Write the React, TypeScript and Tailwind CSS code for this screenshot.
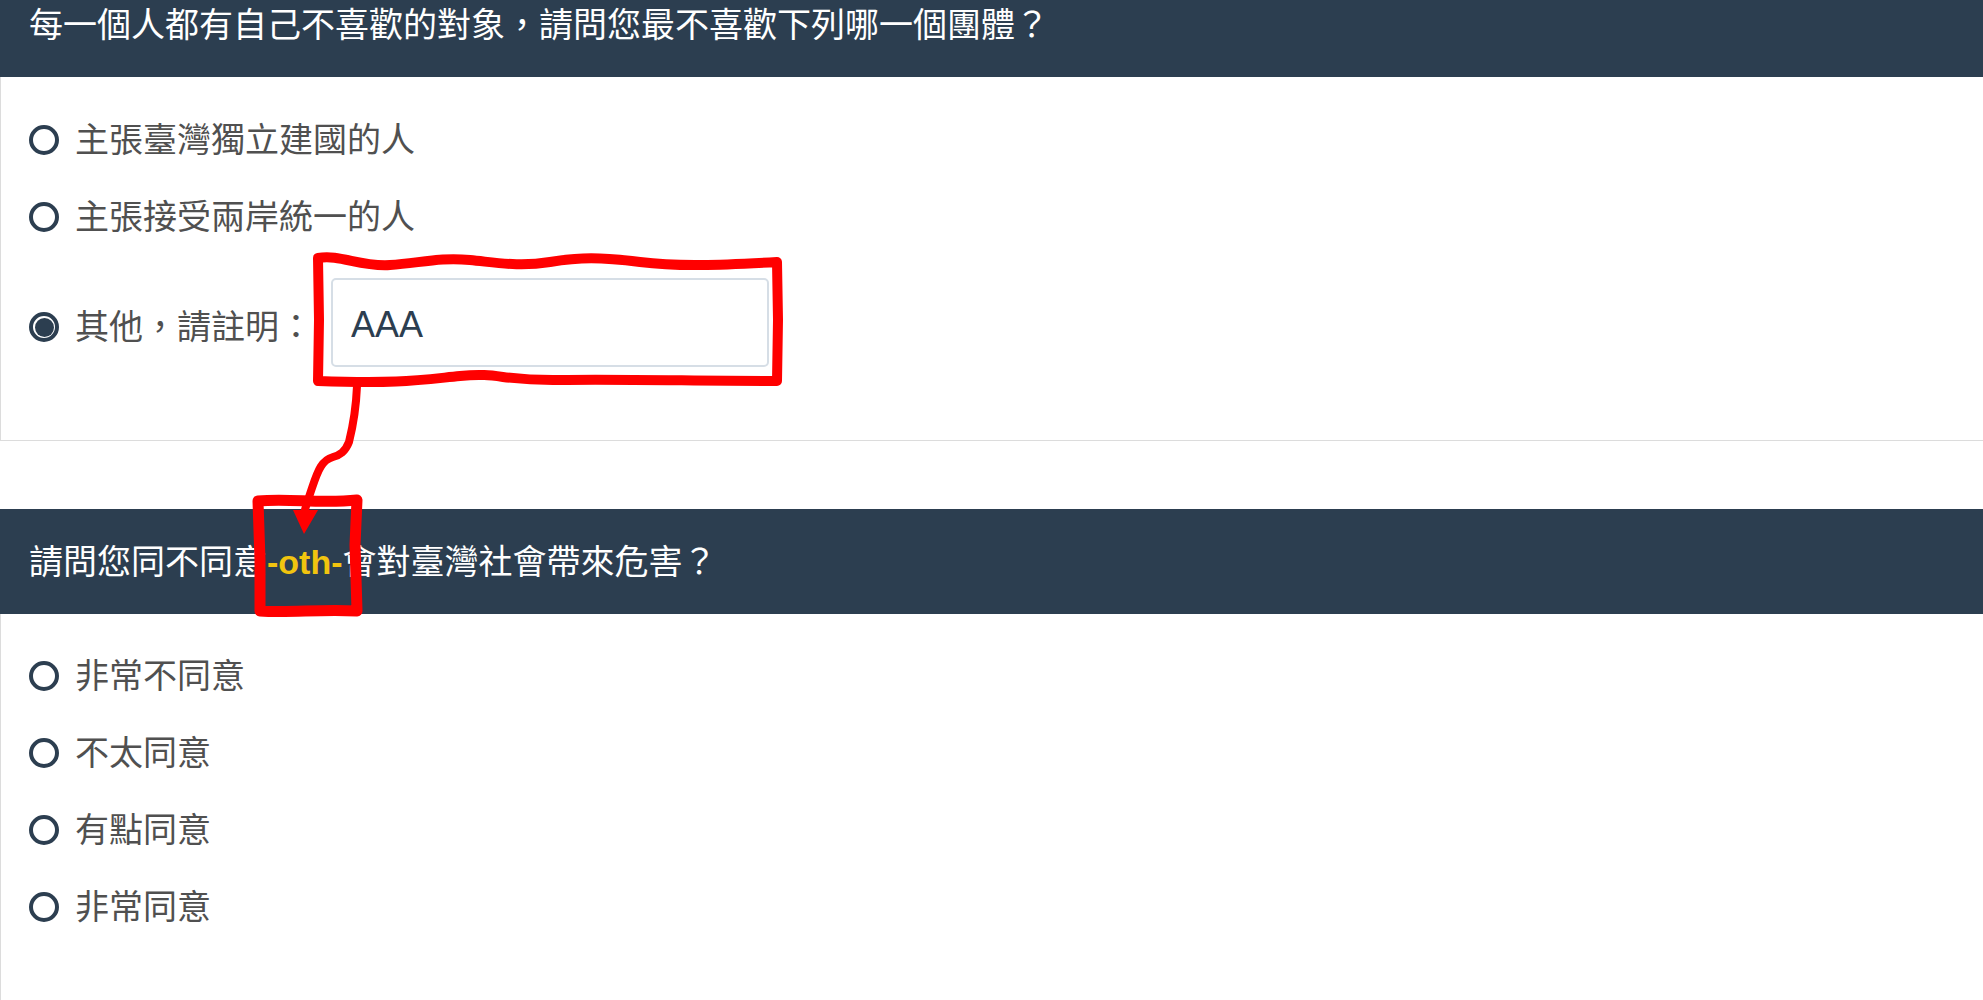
import React from "react";

const font = "font-['Liberation_Sans','Noto_Sans_CJK_TC',sans-serif]";

function Radio({ checked }: { checked?: boolean }) {
  return (
    <span className="w-[30px] h-[30px] shrink-0 rounded-full border-[4px] border-[#2c3e50] flex items-center justify-center">
      {checked && <span className="w-[19px] h-[19px] rounded-full bg-[#2c3e50]" />}
    </span>
  );
}

function Option({ label, checked, children }: { label: string; checked?: boolean; children?: React.ReactNode }) {
  return (
    <label className="flex items-center gap-[16px] h-[77px] text-[34px] leading-none text-[#505050]">
      <Radio checked={checked} />
      <span>{label}</span>
      {children}
    </label>
  );
}

function Header({ children }: { children: React.ReactNode }) {
  return (
    <div className="h-[105px] bg-[#2c3e50] px-[29px] flex items-center text-white text-[34px] leading-none">
      {children}
    </div>
  );
}

function Annotations() {
  return (
    <svg
      className="absolute inset-0 pointer-events-none"
      width="1983"
      height="1000"
      viewBox="0 0 1983 1000"
      fill="none"
    >
      <path
        d="M318 258 C340 254, 360 267, 390 265 S440 257, 470 260 S520 267, 550 262 S600 257, 640 262 S720 265, 777 262 L778 320 L777 381 C700 381, 620 379, 560 380 S500 372, 460 376 S400 384, 318 381 L319 320 Z"
        stroke="#ff0000"
        strokeWidth="10"
        strokeLinejoin="round"
      />
      <path
        d="M357 386 C356 410, 352 430, 349 442 C345 452, 340 455, 333 457 C322 460, 318 470, 312 488 C308 500, 305 508, 304 514"
        stroke="#ff0000"
        strokeWidth="8"
        strokeLinecap="round"
      />
      <polygon points="293,510 318,510 304,534" fill="#ff0000" />
      <path
        d="M258 501 C290 498, 320 504, 357 500 L355 545 L357 611 C320 609, 290 613, 260 611 L260 560 Z"
        stroke="#ff0000"
        strokeWidth="11"
        strokeLinejoin="round"
      />
    </svg>
  );
}

export default function App() {
  return (
    <div className={`relative w-[1983px] h-[1000px] overflow-hidden bg-white ${font}`}>
      <div className="-mt-[28px]">
        <Header>每一個人都有自己不喜歡的對象，請問您最不喜歡下列哪一個團體？</Header>
        <div className="border-l border-b border-[#dcdcdc] pt-[24px] pb-[73px] pl-[28px]">
          <Option label="主張臺灣獨立建國的人" />
          <Option label="主張接受兩岸統一的人" />
          <div className="mt-[23px] flex items-center text-[34px] leading-none text-[#505050]">
            <div className="mt-[9px] flex items-center gap-[16px]">
              <Radio checked />
              <span>其他，請註明：</span>
            </div>
            <input
              readOnly
              value="AAA"
              className="ml-[18px] w-[438px] h-[89px] border-2 border-[#d6dee6] rounded-[5px] pl-[18px] pt-[4px] text-[36px] text-[#2c3e50] font-['Liberation_Sans',sans-serif] outline-none"
            />
          </div>
        </div>
      </div>

      <div className="mt-[68px]">
        <Header>
          請問您同不同意<span className="font-bold text-[#f1c40f]">-oth-</span>會對臺灣社會帶來危害？
        </Header>
        <div className="border-l border-[#dcdcdc] pt-[23px] pl-[28px] h-[400px]">
          <Option label="非常不同意" />
          <Option label="不太同意" />
          <Option label="有點同意" />
          <Option label="非常同意" />
        </div>
      </div>

      <Annotations />
    </div>
  );
}
